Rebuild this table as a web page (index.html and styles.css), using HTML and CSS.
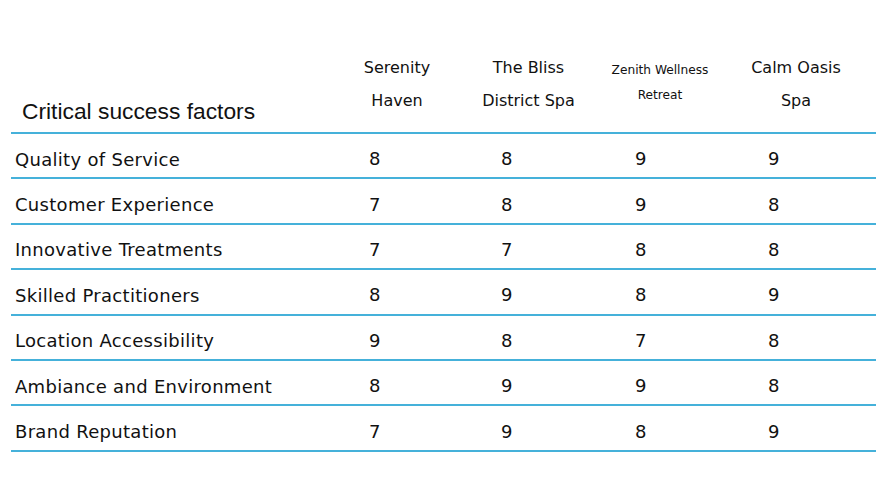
FILE: index.html
```html
<!DOCTYPE html>
<html lang="en">
<head>
<meta charset="utf-8">
<title>Critical success factors</title>
<link rel="stylesheet" href="styles.css">
</head>
<body>
<div class="table">
  <div class="row head">
    <div class="cell title">Critical success factors</div>
    <div class="cell col">Serenity<br>Haven</div>
    <div class="cell col">The Bliss<br>District Spa</div>
    <div class="cell col small">Zenith Wellness<br>Retreat</div>
    <div class="cell col">Calm Oasis<br>Spa</div>
  </div>
  <div class="row"><div class="cell label">Quality of Service</div><div class="cell num">8</div><div class="cell num">8</div><div class="cell num">9</div><div class="cell num">9</div></div>
  <div class="row"><div class="cell label">Customer Experience</div><div class="cell num">7</div><div class="cell num">8</div><div class="cell num">9</div><div class="cell num">8</div></div>
  <div class="row"><div class="cell label">Innovative Treatments</div><div class="cell num">7</div><div class="cell num">7</div><div class="cell num">8</div><div class="cell num">8</div></div>
  <div class="row"><div class="cell label">Skilled Practitioners</div><div class="cell num">8</div><div class="cell num">9</div><div class="cell num">8</div><div class="cell num">9</div></div>
  <div class="row"><div class="cell label">Location Accessibility</div><div class="cell num">9</div><div class="cell num">8</div><div class="cell num">7</div><div class="cell num">8</div></div>
  <div class="row"><div class="cell label">Ambiance and Environment</div><div class="cell num">8</div><div class="cell num">9</div><div class="cell num">9</div><div class="cell num">8</div></div>
  <div class="row last"><div class="cell label">Brand Reputation</div><div class="cell num">7</div><div class="cell num">9</div><div class="cell num">8</div><div class="cell num">9</div></div>
</div>
</body>
</html>
```

FILE: styles.css
```css
html, body {
  margin: 0;
  padding: 0;
  background: #ffffff;
}

body {
  font-family: "DejaVu Sans", "Open Sans", sans-serif;
  color: #111111;
}

.table {
  padding-top: 44px;
  margin-left: 11px;
  width: 865px;
}

.row {
  display: grid;
  grid-template-columns: 330px 132px 131px 132px 140px;
  height: 43.4px;
  border-bottom: 2px solid #45b1da;
}

.row.head {
  height: 88px;
}

.cell {
  display: flex;
  align-items: center;
}

.title {
  font-family: "Liberation Sans", Arial, sans-serif;
  font-size: 22.8px;
  align-items: flex-end;
  padding-left: 11px;
  padding-bottom: 7px;
}

.col {
  display: block;
  text-align: center;
  padding-right: 20px;
  padding-top: 7px;
  font-size: 16px;
  line-height: 33px;
}

.col.small {
  font-size: 12.2px;
  line-height: 25px;
  padding-top: 14px;
}

.label {
  padding-left: 4px;
  padding-top: 7px;
  font-size: 18px;
  letter-spacing: 0.3px;
}

.num {
  padding-top: 6px;
  font-size: 18px;
}

.num:nth-child(2) { padding-left: 28px; }
.num:nth-child(3) { padding-left: 28px; }
.num:nth-child(4) { padding-left: 31px; }
.num:nth-child(5) { padding-left: 32px; }
```
